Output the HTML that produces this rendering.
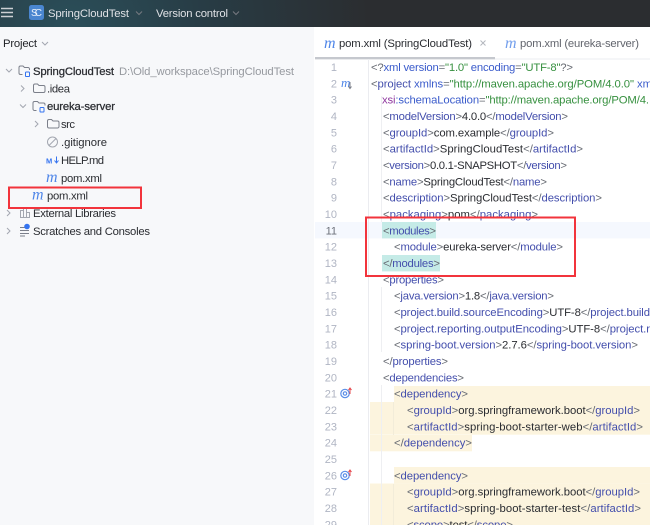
<!DOCTYPE html>
<html><head><meta charset="utf-8"><style>
html,body{margin:0;padding:0;background:#fff;width:650px;height:525px;overflow:hidden}
svg{display:block;filter:blur(.3px)}
text{font-family:"Liberation Sans",sans-serif;font-size:11.3px;fill:#2a2c31}
.b{fill:#666a72}.t{fill:#434eac}.a{fill:#3a5bcb}.v{fill:#36903f}.x{fill:#8f389f}.k{fill:#2a2c31}
.n{fill:#b0b5c3;text-anchor:end;font-size:11px}
.g{fill:none;stroke:#7b7f8a;stroke-width:1}
.c{fill:none;stroke:#a3a7b0;stroke-width:1}
.m{font-family:"Liberation Serif",serif;font-style:italic;font-size:16px;fill:#4f86e8}
.s{stroke:#2a2c31;stroke-width:.25px}
</style></head><body>
<svg width="650" height="525" viewBox="0 0 650 525" xmlns="http://www.w3.org/2000/svg">
<defs>
<radialGradient id="tb" gradientUnits="userSpaceOnUse" cx="70" cy="30" r="300"><stop offset="0" stop-color="#2b4f5a"/><stop offset=".45" stop-color="#283c45"/><stop offset="1" stop-color="#2b2d30"/></radialGradient>
</defs>
<rect width="650" height="525" fill="#fff"/>
<rect width="314" height="525" y="27" fill="#f7f8fa"/>
<rect width="650" height="27" fill="url(#tb)"/>
<!-- title bar -->
<g stroke="#cdd0d4" stroke-width="1.500"><path d="M1 8.500H13M1 12.500H13M1 16.500H13"/></g>
<rect x="29" y="5" width="15" height="15" rx="2.500" fill="#4a86d0"/>
<text x="31" y="16" style="font-size:10px;fill:#e8f0fa" textLength="11">SC</text>
<text x="48" y="17" style="fill:#dfe1e5" textLength="81">SpringCloudTest</text>
<path d="M136 11.500l3 3 3-3" fill="none" stroke="#767a81"/>
<text x="156" y="17" style="fill:#dfe1e5" textLength="72">Version control</text>
<path d="M233 11.500l3 3 3-3" fill="none" stroke="#767a81"/>
<!-- project header -->
<text x="3" y="47" style="fill:#1f2125" textLength="34">Project</text>
<path d="M42 42l3 3 3-3" class="c"/>
<!-- tree -->
<path d="M6 69l3 3 3-3" class="c"/>
<path d="M22.500 74.500h-2a1.500 1.500 0 0 1-1.500-1.500v-5.500a1.500 1.500 0 0 1 1.500-1.500h2.500l1.500 1.500h3.500a1.500 1.500 0 0 1 1.500 1.500v1" class="g"/>
<rect x="25.500" y="72" width="4" height="4.500" rx=".8" fill="none" stroke="#3574f0"/>
<text x="33" y="75" class="s" textLength="81">SpringCloudTest</text>
<text x="119" y="75" style="fill:#96999f" textLength="175">D:\Old_workspace\SpringCloudTest</text>

<path d="M21 85.500l3 3-3 3" class="c"/>
<path d="M34.500 84h3l1.500 1.500h4.500a1.500 1.500 0 0 1 1.500 1.500v4a1.500 1.500 0 0 1-1.500 1.500h-8.500a1.500 1.500 0 0 1-1.500-1.500v-5.500a1.500 1.500 0 0 1 1.500-1.500z" class="g"/>
<text x="47" y="92.500" textLength="23">.idea</text>

<path d="M20 104.500l3 3 3-3" class="c"/>
<path d="M36.500 110.500h-2a1.500 1.500 0 0 1-1.500-1.500v-6a1.500 1.500 0 0 1 1.500-1.500h3l1.500 1.500h4.500a1.500 1.500 0 0 1 1.500 1.500v1" class="g"/>
<rect x="40" y="107.500" width="4" height="4.500" rx=".8" fill="none" stroke="#3574f0"/>
<text x="47" y="110" class="s" textLength="68">eureka-server</text>

<path d="M35 121l3 3-3 3" class="c"/>
<path d="M48.500 119.500h3l1.500 1.500h4.500a1.500 1.500 0 0 1 1.500 1.500v4a1.500 1.500 0 0 1-1.500 1.500h-8.500a1.500 1.500 0 0 1-1.500-1.500v-5.500a1.500 1.500 0 0 1 1.500-1.500z" class="g"/>
<text x="61" y="128" textLength="14">src</text>

<circle cx="52.500" cy="142" r="5" class="c"/><path d="M49 145.500l7-7" class="c"/>
<text x="61" y="146" textLength="46">.gitignore</text>

<text x="46" y="163.500" style="font-size:7.500px;font-weight:bold;fill:#3574f0" textLength="9">M</text>
<path d="M56.500 156.500v6M54.500 160.500l2 2.500 2-2.500" fill="none" stroke="#3574f0"/>
<text x="61" y="164" textLength="43">HELP.md</text>

<text x="46" y="182" class="m" textLength="12">m</text>
<text x="61" y="182" textLength="41">pom.xml</text>
<text x="32" y="199.500" class="m" textLength="12">m</text>
<text x="47" y="199.500" textLength="41">pom.xml</text>

<path d="M7 210l3 3-3 3" class="c"/>
<path d="M20.500 217.500v-7h3v7zM23.500 217.500v-9h3v9zM26.500 217.500v-5h3v5z" class="c"/>
<text x="33" y="217" textLength="83">External Libraries</text>

<path d="M7 228l3 3-3 3" class="c"/>
<path d="M20 227.500h5M20 230.500h9M20 233.500h9M20 236h5" class="g"/>
<circle cx="27" cy="226.500" r="2.800" fill="#3574f0"/>
<text x="33" y="235" textLength="117">Scratches and Consoles</text>

<!-- tabs -->
<text x="324" y="48" class="m" textLength="12">m</text>
<text x="339" y="47" style="fill:#2a2c31" textLength="133">pom.xml (SpringCloudTest)</text>
<path d="M480.500 40.500l5 5M485.500 40.500l-5 5" fill="none" stroke="#b4b7be"/>
<text x="505" y="48" class="m" style="opacity:.8" textLength="12">m</text>
<text x="520" y="47" style="fill:#62656d" textLength="119">pom.xml (eureka-server)</text>
<rect x="315" y="58.500" width="335" height="1" fill="#ebecf0"/>
<rect x="315" y="57" width="180" height="2.300" fill="#c5c8ce"/>

<!-- editor backgrounds -->
<rect x="315" y="222" width="335" height="16.400" fill="#f5f8fe"/>
<rect x="394" y="386" width="256" height="16.400" fill="#fcf4de"/>
<rect x="370" y="402" width="280" height="32.700" fill="#fcf4de"/>
<rect x="370" y="435" width="102" height="16.300" fill="#fcf4de"/>
<rect x="394" y="467" width="256" height="16.400" fill="#fcf4de"/>
<rect x="370" y="483.500" width="280" height="41.500" fill="#fcf4de"/>
<rect x="382" y="222" width="54" height="16.400" fill="#c5ebe7"/>
<rect x="382" y="255" width="58" height="16.400" fill="#c5ebe7"/>
<rect x="368" y="59" width="1" height="466" fill="#ebecf0"/>
<g fill="#eeeff2">
<rect x="381" y="96" width="1" height="126"/>
<rect x="381" y="287" width="1" height="65"/>
<rect x="381" y="385" width="1" height="140"/>
</g>
<g fill="#f2ecd9">
<rect x="393" y="402" width="1" height="33"/>
<rect x="393" y="484" width="1" height="41"/>
</g>

<!-- line numbers -->
<g>
<text class="n" x="337" y="71">1</text><text class="n" x="337" y="87.300">2</text><text class="n" x="337" y="103.700">3</text><text class="n" x="337" y="120">4</text><text class="n" x="337" y="136.300">5</text><text class="n" x="337" y="152.700">6</text><text class="n" x="337" y="169">7</text><text class="n" x="337" y="185.300">8</text><text class="n" x="337" y="201.700">9</text><text class="n" x="337" y="218">10</text><text class="n" x="337" y="234.300" style="fill:#6c707a">11</text><text class="n" x="337" y="250.700">12</text><text class="n" x="337" y="267">13</text><text class="n" x="337" y="283.300">14</text><text class="n" x="337" y="299.700">15</text><text class="n" x="337" y="316">16</text><text class="n" x="337" y="332.300">17</text><text class="n" x="337" y="348.700">18</text><text class="n" x="337" y="365">19</text><text class="n" x="337" y="381.300">20</text><text class="n" x="337" y="397.700">21</text><text class="n" x="337" y="414">22</text><text class="n" x="337" y="430.300">23</text><text class="n" x="337" y="446.700">24</text><text class="n" x="337" y="463">25</text><text class="n" x="337" y="479.300">26</text><text class="n" x="337" y="495.700">27</text><text class="n" x="337" y="512">28</text><text class="n" x="337" y="528.300">29</text>
</g>

<!-- gutter icons -->
<text x="341" y="87" class="m" style="font-size:13px" textLength="9">m</text>
<path d="M350 82v6M348.500 86.500l1.500 2 1.500-2" fill="none" stroke="#7b7f8a"/>
<g fill="none" stroke="#5a8ee8" stroke-width="1.200"><circle cx="345" cy="393.500" r="4.200"/><circle cx="345" cy="393.500" r="1.700"/></g>
<path d="M350 394v-5.500M348.500 390l1.500-2 1.500 2" fill="none" stroke="#e5484d"/>
<g fill="none" stroke="#5a8ee8" stroke-width="1.200"><circle cx="345" cy="475.500" r="4.200"/><circle cx="345" cy="475.500" r="1.700"/></g>
<path d="M350 476v-5.500M348.500 472l1.500-2 1.500 2" fill="none" stroke="#e5484d"/>

<!-- code -->
<text x="371" y="71" textLength="202"><tspan class="b">&lt;?</tspan><tspan class="a">xml version</tspan><tspan class="b">=</tspan><tspan class="v">"1.0"</tspan> <tspan class="a">encoding</tspan><tspan class="b">=</tspan><tspan class="v">"UTF-8"</tspan><tspan class="b">?&gt;</tspan></text>
<text x="371" y="87.300" textLength="281"><tspan class="b">&lt;</tspan><tspan class="t">project</tspan> <tspan class="a">xmlns</tspan><tspan class="b">=</tspan><tspan class="v">"http://maven.apache.org/POM/4.0.0"</tspan> <tspan class="a">xm</tspan></text>
<text x="382" y="103.700" textLength="267"><tspan class="x">xsi</tspan><tspan class="a">:schemaLocation</tspan><tspan class="b">=</tspan><tspan class="v">"http://maven.apache.org/POM/4.</tspan></text>
<text x="383" y="120" textLength="185"><tspan class="b">&lt;</tspan><tspan class="t">modelVersion</tspan><tspan class="b">&gt;</tspan>4.0.0<tspan class="b">&lt;/</tspan><tspan class="t">modelVersion</tspan><tspan class="b">&gt;</tspan></text>
<text x="383" y="136.300" textLength="171"><tspan class="b">&lt;</tspan><tspan class="t">groupId</tspan><tspan class="b">&gt;</tspan>com.example<tspan class="b">&lt;/</tspan><tspan class="t">groupId</tspan><tspan class="b">&gt;</tspan></text>
<text x="383" y="152.700" textLength="200"><tspan class="b">&lt;</tspan><tspan class="t">artifactId</tspan><tspan class="b">&gt;</tspan>SpringCloudTest<tspan class="b">&lt;/</tspan><tspan class="t">artifactId</tspan><tspan class="b">&gt;</tspan></text>
<text x="383" y="169" textLength="184"><tspan class="b">&lt;</tspan><tspan class="t">version</tspan><tspan class="b">&gt;</tspan>0.0.1-SNAPSHOT<tspan class="b">&lt;/</tspan><tspan class="t">version</tspan><tspan class="b">&gt;</tspan></text>
<text x="383" y="185.300" textLength="164"><tspan class="b">&lt;</tspan><tspan class="t">name</tspan><tspan class="b">&gt;</tspan>SpringCloudTest<tspan class="b">&lt;/</tspan><tspan class="t">name</tspan><tspan class="b">&gt;</tspan></text>
<text x="383" y="201.700" textLength="219"><tspan class="b">&lt;</tspan><tspan class="t">description</tspan><tspan class="b">&gt;</tspan>SpringCloudTest<tspan class="b">&lt;/</tspan><tspan class="t">description</tspan><tspan class="b">&gt;</tspan></text>
<text x="383" y="218" textLength="155"><tspan class="b">&lt;</tspan><tspan class="t">packaging</tspan><tspan class="b">&gt;</tspan>pom<tspan class="b">&lt;/</tspan><tspan class="t">packaging</tspan><tspan class="b">&gt;</tspan></text>
<text x="383" y="234.300" textLength="53"><tspan class="b">&lt;</tspan><tspan class="t">modules</tspan><tspan class="b">&gt;</tspan></text>
<text x="394" y="250.700" textLength="169"><tspan class="b">&lt;</tspan><tspan class="t">module</tspan><tspan class="b">&gt;</tspan>eureka-server<tspan class="b">&lt;/</tspan><tspan class="t">module</tspan><tspan class="b">&gt;</tspan></text>
<text x="383" y="267" textLength="57"><tspan class="b">&lt;/</tspan><tspan class="t">modules</tspan><tspan class="b">&gt;</tspan></text>
<text x="383" y="283.300" textLength="61"><tspan class="b">&lt;</tspan><tspan class="t">properties</tspan><tspan class="b">&gt;</tspan></text>
<text x="394" y="299.700" textLength="160"><tspan class="b">&lt;</tspan><tspan class="t">java.version</tspan><tspan class="b">&gt;</tspan>1.8<tspan class="b">&lt;/</tspan><tspan class="t">java.version</tspan><tspan class="b">&gt;</tspan></text>
<text x="394" y="316" textLength="256"><tspan class="b">&lt;</tspan><tspan class="t">project.build.sourceEncoding</tspan><tspan class="b">&gt;</tspan>UTF-8<tspan class="b">&lt;/</tspan><tspan class="t">project.build</tspan></text>
<text x="394" y="332.300" textLength="256"><tspan class="b">&lt;</tspan><tspan class="t">project.reporting.outputEncoding</tspan><tspan class="b">&gt;</tspan>UTF-8<tspan class="b">&lt;/</tspan><tspan class="t">project.r</tspan></text>
<text x="394" y="348.700" textLength="244"><tspan class="b">&lt;</tspan><tspan class="t">spring-boot.version</tspan><tspan class="b">&gt;</tspan>2.7.6<tspan class="b">&lt;/</tspan><tspan class="t">spring-boot.version</tspan><tspan class="b">&gt;</tspan></text>
<text x="383" y="365" textLength="65"><tspan class="b">&lt;/</tspan><tspan class="t">properties</tspan><tspan class="b">&gt;</tspan></text>
<text x="383" y="381.300" textLength="81"><tspan class="b">&lt;</tspan><tspan class="t">dependencies</tspan><tspan class="b">&gt;</tspan></text>
<text x="394" y="397.700" textLength="74"><tspan class="b">&lt;</tspan><tspan class="t">dependency</tspan><tspan class="b">&gt;</tspan></text>
<text x="407" y="414" textLength="233"><tspan class="b">&lt;</tspan><tspan class="t">groupId</tspan><tspan class="b">&gt;</tspan>org.springframework.boot<tspan class="b">&lt;/</tspan><tspan class="t">groupId</tspan><tspan class="b">&gt;</tspan></text>
<text x="407" y="430.300" textLength="236"><tspan class="b">&lt;</tspan><tspan class="t">artifactId</tspan><tspan class="b">&gt;</tspan>spring-boot-starter-web<tspan class="b">&lt;/</tspan><tspan class="t">artifactId</tspan><tspan class="b">&gt;</tspan></text>
<text x="394" y="446.700" textLength="78"><tspan class="b">&lt;/</tspan><tspan class="t">dependency</tspan><tspan class="b">&gt;</tspan></text>
<text x="394" y="479.300" textLength="74"><tspan class="b">&lt;</tspan><tspan class="t">dependency</tspan><tspan class="b">&gt;</tspan></text>
<text x="407" y="495.700" textLength="233"><tspan class="b">&lt;</tspan><tspan class="t">groupId</tspan><tspan class="b">&gt;</tspan>org.springframework.boot<tspan class="b">&lt;/</tspan><tspan class="t">groupId</tspan><tspan class="b">&gt;</tspan></text>
<text x="407" y="512" textLength="234"><tspan class="b">&lt;</tspan><tspan class="t">artifactId</tspan><tspan class="b">&gt;</tspan>spring-boot-starter-test<tspan class="b">&lt;/</tspan><tspan class="t">artifactId</tspan><tspan class="b">&gt;</tspan></text>
<text x="407" y="528.300" textLength="106"><tspan class="b">&lt;</tspan><tspan class="t">scope</tspan><tspan class="b">&gt;</tspan>test<tspan class="b">&lt;/</tspan><tspan class="t">scope</tspan><tspan class="b">&gt;</tspan></text>

<!-- red annotation boxes -->
<rect x="9" y="187.500" width="132" height="20.500" fill="none" stroke="#f2343c" stroke-width="2"/>
<rect x="366" y="217.500" width="209" height="58.500" fill="none" stroke="#f2343c" stroke-width="2"/>
</svg>
</body></html>
